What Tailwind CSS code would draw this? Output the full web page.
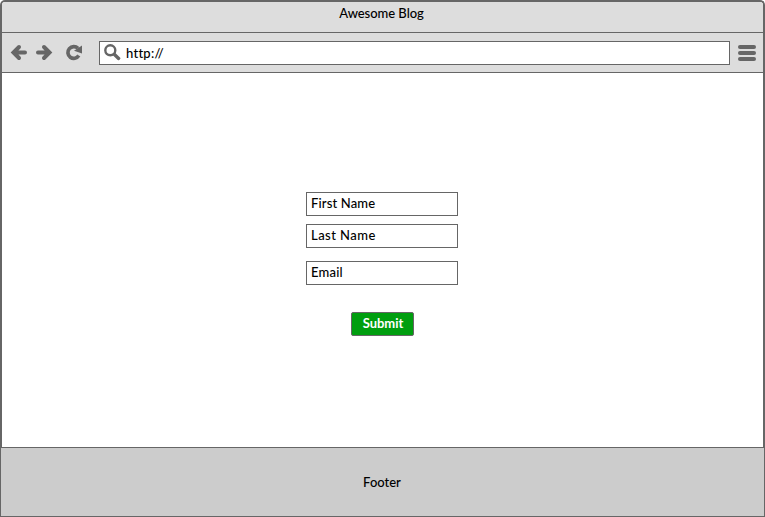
<!DOCTYPE html>
<html lang="en">
<head>
<meta charset="utf-8">
<title>Awesome Blog</title>
<script src="https://cdn.jsdelivr.net/npm/@tailwindcss/browser@4"></script>
</head>
<body class="w-[765px] h-[517px] overflow-hidden bg-white flex flex-col font-['Lato','Liberation_Sans',sans-serif] text-[13px] leading-4 font-medium text-black">
  <div class="h-[447px] flex flex-col border-2 border-b-0 border-[#666] rounded-t-[5px] overflow-hidden bg-white">
    <header class="h-[31px] shrink-0 bg-[#ddd] border-b border-[#666] flex justify-center pt-[3px] pr-0.5">
      <span class="tracking-[-0.04px]">Awesome Blog</span>
    </header>
    <nav class="h-10 shrink-0 bg-[#ddd] border-b border-[#666] flex items-center pl-2">
      <svg class="w-[18px] h-[19px]" viewBox="0 0 18 19" fill="none" stroke="#666" stroke-width="4"><path d="M4 9.500H15M9 4 3.500 9.500 9 15" stroke-linecap="round"/></svg>
      <svg class="w-[18px] h-[19px] ml-[7px]" viewBox="0 0 18 19" fill="none" stroke="#666" stroke-width="4"><path d="M14 9.500H3M9 4l5.500 5.500L9 15" stroke-linecap="round"/></svg>
      <svg class="w-[18px] h-[19px] ml-[12px]" viewBox="0 0 18 19"><path d="M13 5.300A5.900 5.900 0 1 0 13.800 12.600" fill="none" stroke="#666" stroke-width="3.700"/><path d="M17 2.500V10.500L9 7.800Z" fill="#666"/></svg>
      <div class="w-[631px] h-6 ml-4 bg-white border border-[#666] flex items-center pl-1">
        <svg class="w-[17px] h-[17px]" viewBox="0 0 17 17" fill="none" stroke="#666"><circle cx="6.300" cy="6.300" r="5" stroke-width="2.400"/><path d="M10.500 10.500 14.600 14.400" stroke-width="3.400" stroke-linecap="round"/></svg>
        <span class="ml-[5px] tracking-[0.25px]">http://</span>
      </div>
      <div class="w-[18px] ml-2 flex flex-col gap-0.5">
        <i class="h-1 rounded-full bg-[#666]"></i><i class="h-1 rounded-full bg-[#666]"></i><i class="h-1 rounded-full bg-[#666]"></i>
      </div>
    </nav>
    <main class="flex-1 flex flex-col items-center pt-[119px] pr-px">
      <div class="w-[152px] h-6 border border-[#666] pl-1 pt-0.5"><span class="tracking-[0.15px]">First Name</span></div>
      <div class="w-[152px] h-6 mt-2 border border-[#666] pl-1 pt-0.5"><span class="tracking-[0.45px]">Last Name</span></div>
      <div class="w-[152px] h-6 mt-[13px] border border-[#666] pl-1 pt-0.5"><span class="tracking-[0.2px]">Email</span></div>
      <button class="w-[63px] h-6 mt-[27px] ml-px rounded-[2px] bg-[#009e0f] border border-[#666] text-white font-bold text-[13px] leading-4 pb-0.5 pl-px">Submit</button>
    </main>
  </div>
  <footer class="h-[70px] bg-[#ccc] border border-[#666] flex items-center justify-center pr-px">
    <span>Footer</span>
  </footer>
</body>
</html>
